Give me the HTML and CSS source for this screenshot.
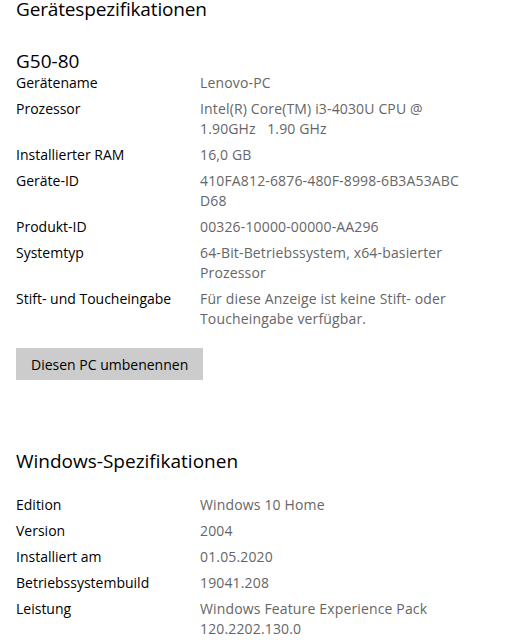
FILE: index.html
```html
<!DOCTYPE html>
<html lang="de">
<head>
<meta charset="utf-8">
<title>Info</title>
<link rel="stylesheet" href="styles.css">
</head>
<body>
<main class="page">
  <h1 class="section-title top-title">Gerätespezifikationen</h1>
  <h2 class="device-model">G50-80</h2>
  <dl class="specs">
    <div class="spec-row"><dt>Gerätename</dt><dd>Lenovo-PC</dd></div>
    <div class="spec-row"><dt>Prozessor</dt><dd>Intel(R) Core(TM) i3-4030U CPU @ 1.90GHz&nbsp;&nbsp; 1.90 GHz</dd></div>
    <div class="spec-row"><dt>Installierter RAM</dt><dd>16,0 GB</dd></div>
    <div class="spec-row"><dt>Geräte-ID</dt><dd class="id">410FA812-6876-480F-8998-6B3A53ABC<br>D68</dd></div>
    <div class="spec-row"><dt>Produkt-ID</dt><dd>00326-10000-00000-AA296</dd></div>
    <div class="spec-row"><dt>Systemtyp</dt><dd>64-Bit-Betriebssystem, x64-basierter Prozessor</dd></div>
    <div class="spec-row"><dt>Stift- und Toucheingabe</dt><dd>Für diese Anzeige ist keine Stift- oder Toucheingabe verfügbar.</dd></div>
  </dl>
  <button class="rename-btn" type="button">Diesen PC umbenennen</button>

  <h1 class="section-title win-title">Windows-Spezifikationen</h1>
  <dl class="specs">
    <div class="spec-row"><dt>Edition</dt><dd>Windows 10 Home</dd></div>
    <div class="spec-row"><dt>Version</dt><dd>2004</dd></div>
    <div class="spec-row"><dt>Installiert am</dt><dd>01.05.2020</dd></div>
    <div class="spec-row"><dt>Betriebssystembuild</dt><dd>19041.208</dd></div>
    <div class="spec-row"><dt>Leistung</dt><dd>Windows Feature Experience Pack 120.2202.130.0</dd></div>
  </dl>
</main>
</body>
</html>
```

FILE: styles.css
```css
html, body {
  margin: 0;
  padding: 0;
  background: #ffffff;
}

body {
  font-family: "Open Sans", "Noto Sans", "Liberation Sans", sans-serif;
  color: #000000;
  font-size: 14px;
}

.page {
  padding: 0 16px;
  width: 488px;
  overflow: hidden;
}

.section-title {
  margin: 0;
  font-size: 19px;
  font-weight: 400;
  line-height: 24px;
}

.top-title {
  line-height: 19px;
  letter-spacing: -0.15px;
}

.device-model {
  margin: 30px 0 0;
  font-size: 19px;
  font-weight: 400;
  line-height: 24px;
}

.specs {
  margin: 0;
  display: flex;
  flex-direction: column;
  gap: 6px;
}

.spec-row {
  display: grid;
  grid-template-columns: 184px 272px;
  line-height: 20px;
}

.spec-row dt {
  margin: 0;
  color: #000000;
}

.spec-row dd {
  margin: 0;
  color: #666666;
  letter-spacing: 0.15px;
}

.rename-btn {
  margin-top: 19px;
  display: block;
  height: 32px;
  padding: 0 15px;
  border: none;
  background: #cccccc;
  color: #000000;
  font-family: inherit;
  font-size: 14px;
}

.win-title {
  margin-top: 67px;
  margin-bottom: 20px;
  line-height: 28px;
}
```
